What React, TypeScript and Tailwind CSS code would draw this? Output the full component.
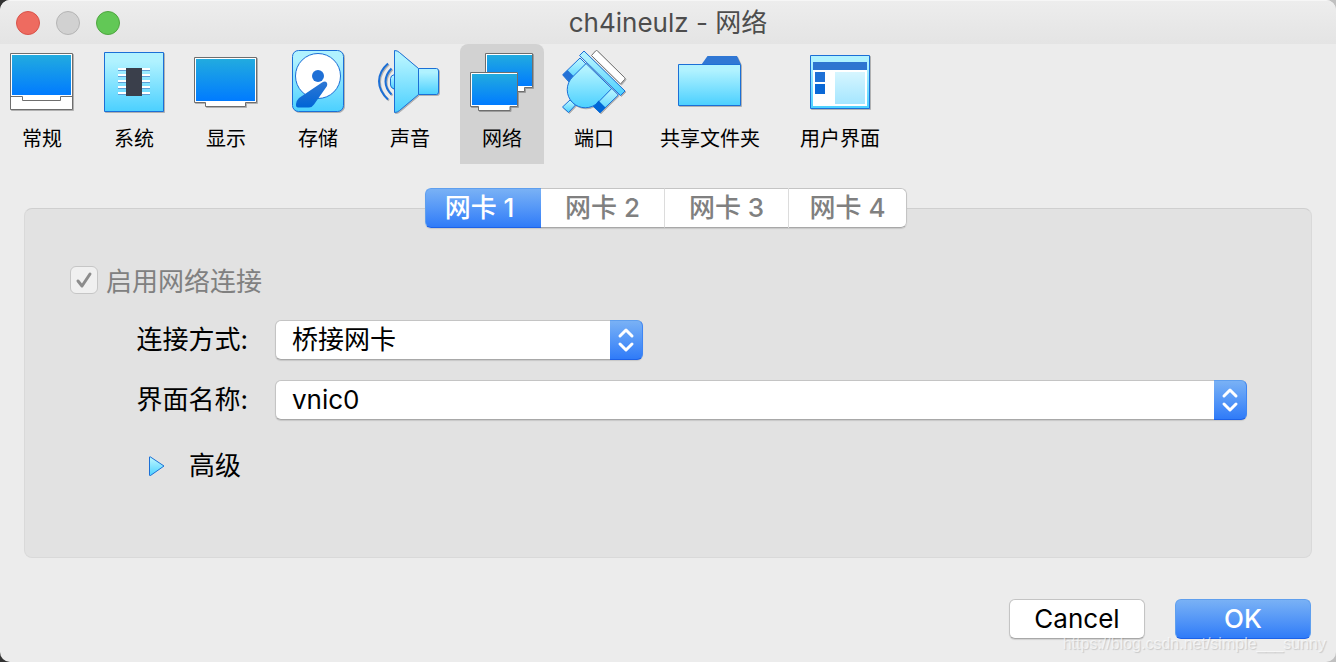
import React, { useState } from 'react';
import clsx from 'clsx';

const Defs: React.FC = () => (
  <svg width="0" height="0" className="absolute" aria-hidden="true">
    <defs>
      <linearGradient id="cyan" x1="0" y1="0" x2="0" y2="1">
        <stop offset="0.15" stopColor="#b0f2ff" />
        <stop offset="1" stopColor="#4bd0ff" />
      </linearGradient>
      <linearGradient id="screen" x1="0" y1="0" x2="0" y2="1">
        <stop offset="0" stopColor="#22abdf" />
        <stop offset="1" stopColor="#007bff" />
      </linearGradient>
      <linearGradient id="navy" x1="0" y1="0" x2="0" y2="1">
        <stop offset="0" stopColor="#2f78d4" />
        <stop offset="1" stopColor="#0064d6" />
      </linearGradient>
      <linearGradient id="pale" x1="0" y1="0" x2="0" y2="1">
        <stop offset="0" stopColor="#d6f6ff" />
        <stop offset="1" stopColor="#a5e6ff" />
      </linearGradient>
    </defs>
  </svg>
);

const Icon: React.FC<{ children: React.ReactNode }> = ({ children }) => (
  <svg
    width="64"
    height="64"
    viewBox="0 0 64 64"
    fill="none"
    overflow="visible"
    aria-hidden="true"
    className="drop-shadow-[1px_1px_0_rgba(0,0,0,0.25)]"
  >
    {children}
  </svg>
);

const GeneralIcon = () => (
  <Icon>
    <path d="M.5 3.5h62v56H.5z" fill="#fff" stroke="#6e6e6e" />
    <path d="M2 5h59v40H2z" fill="url(#screen)" />
    <path d="M.5 46.5h12v4h38v-4h12" stroke="#6e6e6e" />
  </Icon>
);

const SystemIcon = () => (
  <Icon>
    <path d="M2.5 2.5h59v59h-59z" fill="url(#cyan)" stroke="#1b6fd6" />
    {[18, 24, 30, 36, 42].map((y) => (
      <g key={y}>
        <path d={`M16 ${y}h32v2H16z`} fill="#fff" />
        <path d={`M16 ${y + 2}h32v1H16z`} fill="#5f9fd6" />
      </g>
    ))}
    <path d="M24 18h16v28H24z" fill="#3a3f4b" />
  </Icon>
);

const DisplayIcon = () => (
  <Icon>
    <path d="M.5 7.5h62v45h-11v4h-40v-4H.5z" fill="#fff" stroke="#6e6e6e" />
    <path d="M2 9h59v42H2z" fill="url(#screen)" />
  </Icon>
);

const StorageIcon = () => (
  <Icon>
    <rect x="6.5" y=".5" width="51" height="61" rx="6" fill="url(#cyan)" stroke="#1b6fd6" />
    <circle cx="32" cy="26" r="22.5" fill="#fff" stroke="#1b6fd6" />
    <circle cx="32" cy="26" r="6" fill="#1f70d6" />
    <path d="M36 32.5 13 48q-3 3-3 6v1.500q0 2 2 2h11q3 0 5-3l13-18.500q1-4-2-4.500-1.500 0-3 1z" fill="url(#navy)" />
  </Icon>
);

const SoundIcon = () => (
  <Icon>
    <path d="M10 13.500C-2 24-2 38.500 10 49.500M13.500 18.500c-8 8-8 18 0 26" stroke="#1b6fd6" strokeWidth="2" />
    <path d="M16.500 24.500q-4 1-4 4v6.500q0 3 4 4z" fill="url(#cyan)" stroke="#1b6fd6" />
    <path d="M40.500 18.500h18q2 0 2 2.500v21q0 2.500-2 2.500h-18z" fill="url(#cyan)" stroke="#1b6fd6" />
    <path d="M16.500.5q3 0 5 2l19 16v26l-19 16q-2 2-5 2z" fill="url(#cyan)" stroke="#1b6fd6" />
  </Icon>
);

const NetworkIcon = () => (
  <Icon>
    <path d="M15.500 3.500h47v34h-8v4h-32v-4h-7z" fill="#fff" stroke="#6e6e6e" />
    <path d="M17 5h45v31H17z" fill="url(#screen)" />
    <path d="M.5 22.500h47v34h-7.500v4H8.500v-4h-8z" fill="#fff" stroke="#6e6e6e" />
    <path d="M2 24h45v31H2z" fill="url(#screen)" />
  </Icon>
);

const PortsIcon = () => (
  <Icon>
    <path d="M29.500 5.500 33.500 1q1-1 2 0l27 26.500q1 1 0 2L58.500 34z" fill="#fff" stroke="#6e6e6e" strokeLinejoin="round" />
    <g fill="url(#cyan)" stroke="#1b6fd6" strokeLinejoin="round">
      <path d="m8 50 5.500 5-7 7.500-6-5.500z" />
      <path d="M18 8 .7 24.700l6 7L24 14z" />
      <path d="m49.700 38.300 6.600 6.700L38 62.700 31.300 56z" />
      <path d="M24 13.500 10.500 27A18 18 0 0 0 36 52.500l13.700-14z" />
      <path d="m17.500 5.500 4.500-4.500 41 40L58.500 45.500z" />
    </g>
    <path d="m.5 25 5-5 6 6q-3 2-4.500 5.500z" fill="#2371d6" />
    <path d="M31 56.500q3-2 5.500-6l7 7L38 63z" fill="#0066d6" />
  </Icon>
);

const FolderIcon = () => (
  <Icon>
    <path d="m23.500 14.500 6-8.500h29.500l4 8.500z" fill="#3077d4" />
    <path d="M.5 14.500h62v41H.5z" fill="url(#cyan)" stroke="#1b6fd6" />
  </Icon>
);

const InterfaceIcon = () => (
  <Icon>
    <path d="M2.500 5.500h59v53h-59z" fill="url(#cyan)" stroke="#1b6fd6" />
    <path d="M5 20h54v36H5z" fill="#fff" />
    <path d="M5 12h54v8H5z" fill="#2f75d0" />
    <path d="M7 22h10v10H7z" fill="#2071d6" />
    <path d="M7 34h10v10H7z" fill="#0a68d6" />
    <path d="M27 22h30v32H27z" fill="url(#pale)" />
  </Icon>
);

const sections = [
  { name: '常规', icon: GeneralIcon },
  { name: '系统', icon: SystemIcon },
  { name: '显示', icon: DisplayIcon },
  { name: '存储', icon: StorageIcon },
  { name: '声音', icon: SoundIcon },
  { name: '网络', icon: NetworkIcon },
  { name: '端口', icon: PortsIcon },
  { name: '共享文件夹', icon: FolderIcon },
  { name: '用户界面', icon: InterfaceIcon },
];

const adapters = [
  { name: '网卡 1', width: 'w-[116px] rounded-l-md border-l pr-2' },
  { name: '网卡 2', width: 'w-[123px]' },
  { name: '网卡 3', width: 'w-[124px] border-l' },
  { name: '网卡 4', width: 'w-[119px] rounded-r-md border-x' },
];

interface PopupProps {
  id: string;
  options: string[];
  className?: string;
}

const Popup: React.FC<PopupProps> = ({ id, options, className }) => (
  <div className={clsx('relative h-10', className)}>
    <select
      id={id}
      className="block h-10 w-full appearance-none rounded-md border border-[#c4c4c4] border-b-[#a8a8a8] bg-white pr-10 pl-4 text-black shadow-[0_1px_1px_rgba(0,0,0,0.12)]"
    >
      {options.map((option) => (
        <option key={option}>{option}</option>
      ))}
    </select>
    <span className="pointer-events-none absolute inset-y-0 right-0 flex w-[33px] items-center justify-center rounded-r-md border border-l-0 border-t-[#5f9fee] border-r-[#3f86f3] border-b-[#1d62e8] bg-linear-to-b from-[#79b1f5] to-[#2f7bf8]">
      <svg width="18" height="26" viewBox="0 0 18 26" fill="none" stroke="#fff" strokeWidth="3" strokeLinecap="round" strokeLinejoin="round" aria-hidden="true">
        <path d="m3 9 6-6 6 6M3 17l6 6 6-6" />
      </svg>
    </span>
  </div>
);

export default function App() {
  const [section, setSection] = useState('网络');
  const [adapter, setAdapter] = useState('网卡 1');

  return (
    <div className="bg-linear-to-r from-[#333333] to-[#c0c0c0]">
      <Defs />
      <div className="relative flex min-h-screen flex-col overflow-hidden rounded-[10px] bg-[#ececec] font-['Inter','Noto_Sans_CJK_SC',sans-serif] text-[26px] leading-8 text-black">
        <header className="grid h-11 grid-cols-[1fr_auto_1fr] items-center border-t border-[#f6f6f6] bg-linear-to-b from-[#ededed] to-[#e4e4e4] px-4">
          <div className="flex gap-4">
            <button aria-label="Close" className="size-6 rounded-full border border-[#d9534a] bg-[#ee6b60]" />
            <button aria-label="Minimize" disabled className="size-6 rounded-full border border-[#b5b5b5] bg-[#d1d1d1]" />
            <button aria-label="Zoom" className="size-6 rounded-full border border-[#4fa640] bg-[#62c856]" />
          </div>
          <h1 className="text-[#4d4d4d]">ch4ineulz - 网络</h1>
        </header>

        <nav className="flex gap-2">
          {sections.map(({ name, icon: SectionIcon }) => (
            <button
              key={name}
              onClick={() => setSection(name)}
              className={clsx(
                'flex h-[120px] min-w-[84px] flex-col items-center gap-[9px] rounded-t-lg px-4 pt-1.5 text-xl leading-8 whitespace-nowrap',
                name === section && 'bg-[#d2d2d2]'
              )}
            >
              <span className="-mx-4 block">
                <SectionIcon />
              </span>
              {name}
            </button>
          ))}
        </nav>

        <main className="flex flex-1 flex-col px-6 pt-6">
          <div role="tablist" className="z-10 mr-1 -mb-5 flex h-10 self-center rounded-md bg-white shadow-[0_1px_1px_rgba(0,0,0,0.12)]">
            {adapters.map(({ name, width }) => (
              <button
                key={name}
                role="tab"
                aria-selected={name === adapter}
                onClick={() => setAdapter(name)}
                className={clsx(
                  width,
                  'border-y font-medium',
                  name === adapter
                    ? 'border-[#5f9fee] border-b-[#1d62e8] bg-linear-to-b from-[#79b1f5] to-[#2f7bf8] text-white'
                    : 'border-[#c4c4c4] border-b-[#a8a8a8] border-l-[#dcdcdc] text-[#808080]'
                )}
              >
                {name}
              </button>
            ))}
          </div>

          <section className="flex-1 rounded-lg border border-[#d9d9d9] border-t-[#cfcfcf] bg-[#e2e2e2] pt-[57px] pr-16 pb-16 pl-[45px]">
            <div className="flex items-start gap-2">
              <span className="relative size-7">
                <input
                  id="enable-adapter"
                  type="checkbox"
                  defaultChecked
                  disabled
                  className="peer block size-7 appearance-none rounded-md border border-[#c6c6c6] bg-[#f0f0f0]"
                />
                <svg viewBox="0 0 28 28" fill="none" stroke="#8c8c8c" strokeWidth="3" strokeLinecap="round" strokeLinejoin="round" aria-hidden="true" className="pointer-events-none absolute inset-0 hidden peer-checked:block">
                  <path d="m8 15 4 5 8-12" />
                </svg>
              </span>
              <label htmlFor="enable-adapter" className="text-[#808080]">启用网络连接</label>
            </div>

            <div className="mt-[22px] grid grid-cols-[178px_1fr] items-center gap-x-[27px] gap-y-5">
              <label htmlFor="attached-to" className="text-right">连接方式:</label>
              <Popup id="attached-to" options={['桥接网卡']} className="w-[368px]" />
              <label htmlFor="adapter-name" className="text-right">界面名称:</label>
              <Popup id="adapter-name" options={['vnic0']} />
            </div>

            <button className="mt-[30px] ml-[78px] flex items-center gap-6">
              <svg width="17" height="20" viewBox="0 0 17 20" aria-hidden="true">
                <path d="M1.500 1q0-.5 1 0L16 10 2.500 19.500q-1 .5-1-.5z" fill="url(#cyan)" stroke="#1b6fd6" strokeLinejoin="round" />
              </svg>
              高级
            </button>
          </section>
        </main>

        <footer className="flex justify-end gap-[30px] px-[25px] pt-[41px] pb-[23px]">
          <button className="h-10 w-[136px] rounded-md border border-[#c4c4c4] border-b-[#a8a8a8] bg-white shadow-[0_1px_1px_rgba(0,0,0,0.12)]">
            Cancel
          </button>
          <button className="h-10 w-[136px] rounded-md border border-[#5f9fee] border-b-[#1d62e8] bg-linear-to-b from-[#79b1f5] to-[#2f7bf8] font-medium text-white">
            OK
          </button>
        </footer>

        <p className="pointer-events-none absolute right-2.5 bottom-2 font-['Liberation_Sans',sans-serif] text-base leading-5 text-white/60 [text-shadow:1px_1px_1px_rgba(0,0,0,0.15)]">
          https://blog.csdn.net/simple___sunny
        </p>
      </div>
    </div>
  );
}
